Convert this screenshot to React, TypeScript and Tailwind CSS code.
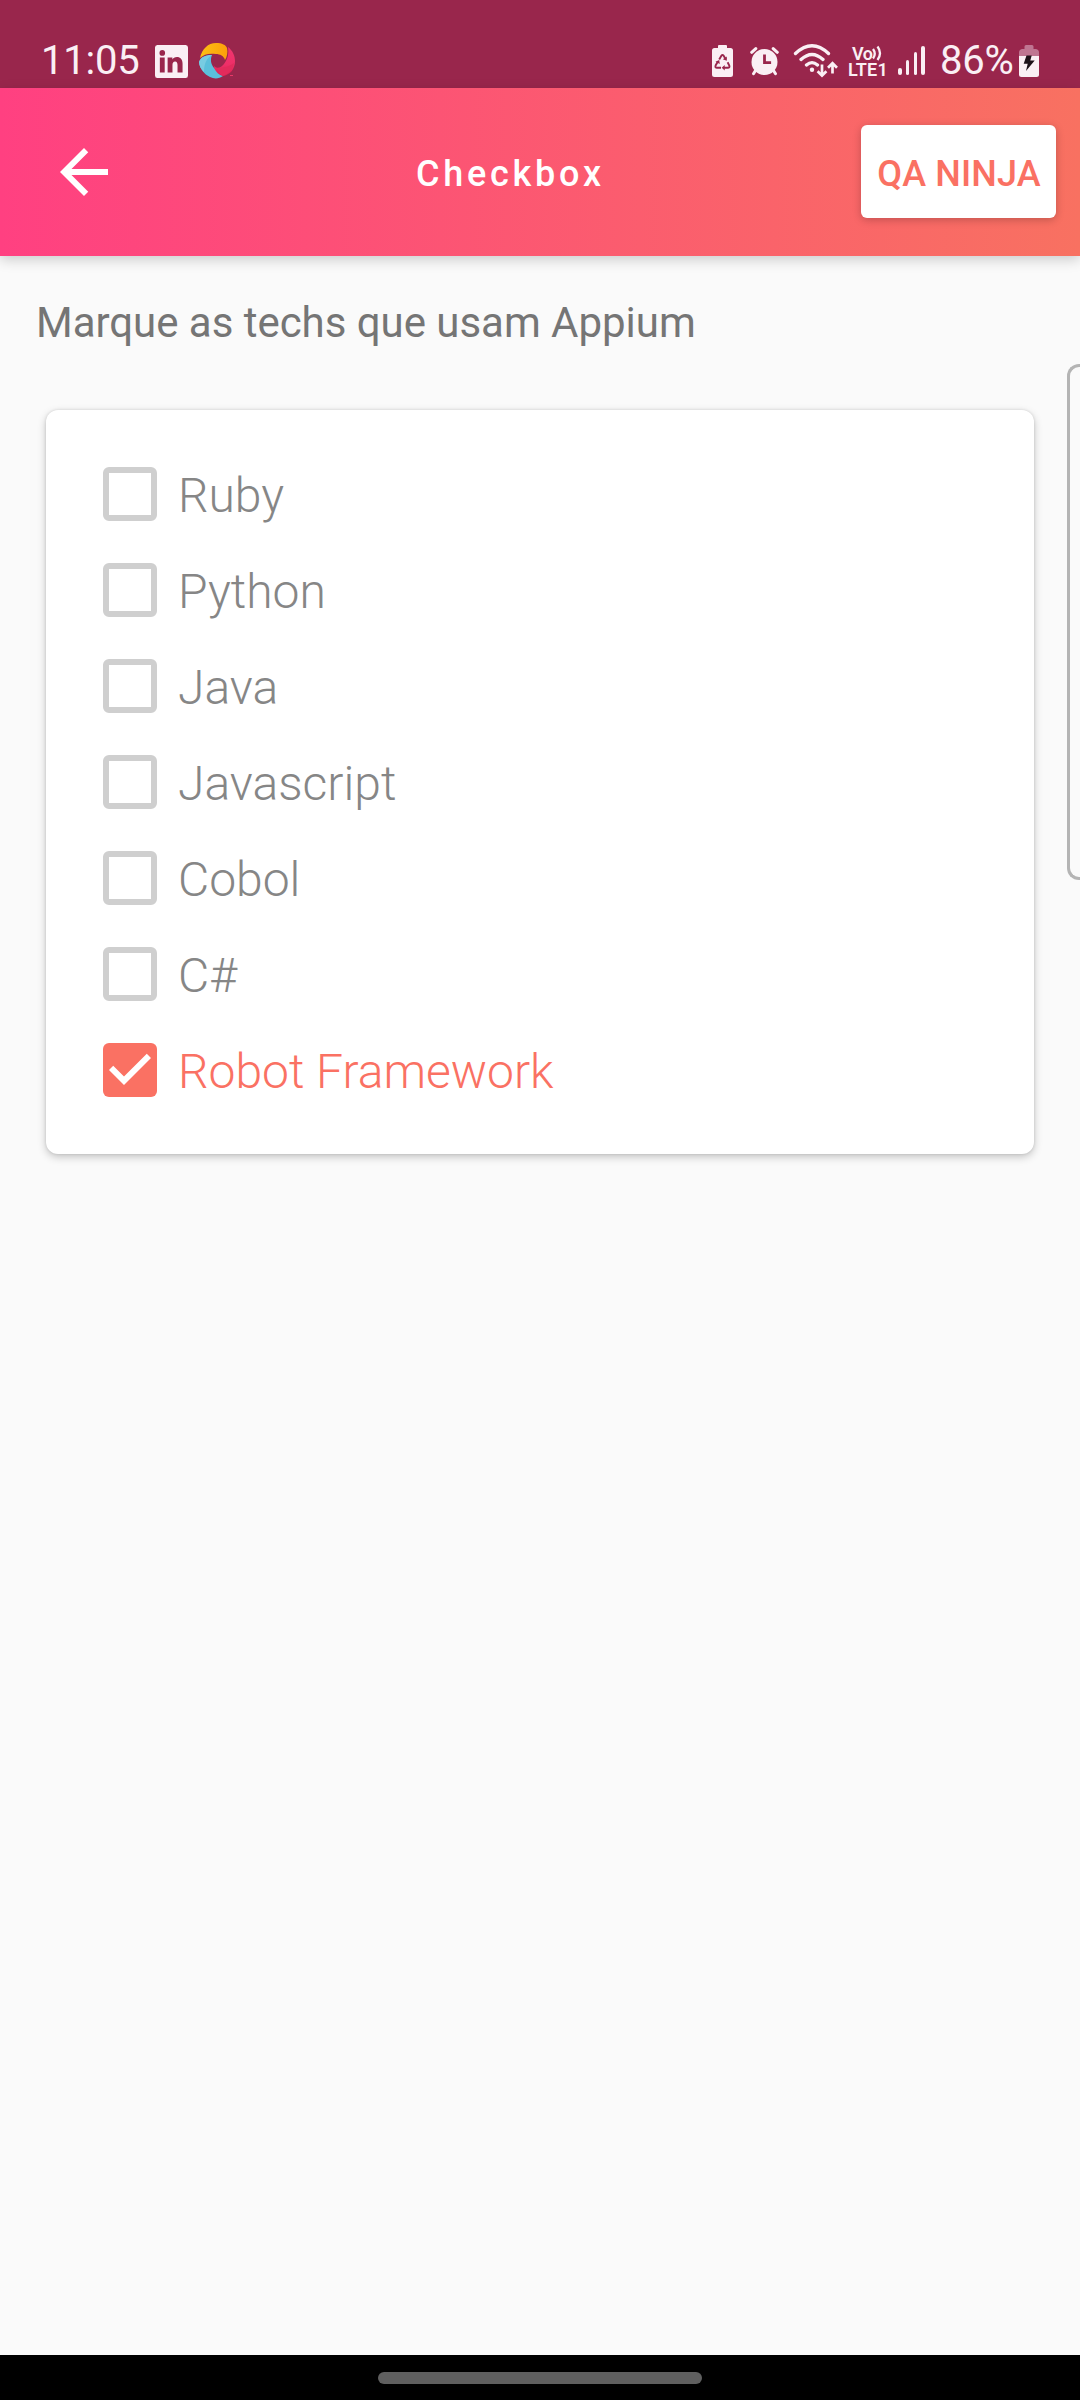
import { useState } from "react";

const TECHS = ["Ruby", "Python", "Java", "Javascript", "Cobol", "C#", "Robot Framework"];

function LinkedInIcon() {
  return (
    <svg className="ml-[16px] mt-[45px] h-[33px] w-[33px]" viewBox="0 0 34 33" preserveAspectRatio="none">
      <path
        fillRule="evenodd"
        fill="#faeff4"
        d="M2.500 0h29a2.500 2.500 0 0 1 2.500 2.500v28a2.500 2.500 0 0 1-2.500 2.500h-29A2.500 2.500 0 0 1 0 30.500v-28A2.500 2.500 0 0 1 2.500 0zM5 12.500V27.500h5V12.500zM7.500 5a2.900 2.900 0 1 0 0 5.800 2.900 2.900 0 0 0 0-5.800zM13 12.500V27.500h5v-7.500c0-2.300.9-3.600 2.700-3.600s2.500 1.400 2.500 3.700v7.400h5.200v-8.700c0-4.400-2.300-6.700-5.800-6.700-2.300 0-3.900 1-4.700 2.500v-2.100z"
      />
    </svg>
  );
}

function SwirlIcon() {
  return (
    <svg className="ml-[11px] mt-[43px] h-[36px] w-[36px]" viewBox="0 0 36 36">
      <defs>
        <linearGradient id="swirl-yellow" x1="0" x2="1">
          <stop offset="0" stopColor="#fcc014" />
          <stop offset="1" stopColor="#fd9f0b" />
        </linearGradient>
        <linearGradient id="swirl-red" x1="0" x2="0" y1="0" y2="1">
          <stop offset="0" stopColor="#f0366f" />
          <stop offset="0.6" stopColor="#ee2f68" />
          <stop offset="1" stopColor="#d91f4c" />
        </linearGradient>
      </defs>
      <path fill="url(#swirl-yellow)" d="M1 15C3 6 9 0 17 0c6 0 10 2 11 5 1 4 0 9-2 12-1-4-5-6-9-6C10 10 5 11 1 15z" />
      <path fill="url(#swirl-red)" d="M29 4c5 4 7 9 7 14 0 8-5 14-12 15-5 0-9-3-9-10 3 3 7 2 10-2 4-5 5-11 4-17z" />
      <path fill="#5bbfdb" d="M0 19c2-5 6-7 13-7-2 5-1 9 2 13 2 4 5 7 9 8-4 3-9 3-13 1C5 31 1 26 0 19z" />
      <path fill="#78cce2" d="M0 19c2-5 6-7 13-7C8 15 5 20 5 29 2 26 0 23 0 19z" />
      <path fill="#e22b5c" d="M18 25c7 0 13-2 17-5-1 6-5 11-11 13-3-1-5-4-6-8z" />
      <path stroke="#e83968" strokeWidth="1" d="M31 32.500h3" />
    </svg>
  );
}

function BatterySaverIcon() {
  return (
    <svg className="mt-[45px] h-[32px] w-[21px]" viewBox="0 0 21 32">
      <path fill="#faeff4" d="M7 0h7q1 0 1 1v2h3.500q2.500 0 2.500 2.500v24q0 2.500-2.500 2.500h-16Q0 32 0 29.500v-24Q0 3 2.500 3H6V1q0-1 1-1z" />
      <g stroke="#99264c" strokeWidth="1.900" fill="none">
        <path d="M7.200 14.500l2.300-3.900q1-1.500 2 0l2.400 4" />
        <path d="M15.600 17.300l1.700 3.200q.7 2.300-1.500 2.300h-4" />
        <path d="M9 22.800H5q-2.200 0-1.400-2.300l2-3.500" />
      </g>
      <path fill="#99264c" d="M14.800 11.500v4.300l-4-1.500zM12.700 20v5.400l-3-2.600zM3.500 16.800l3.700-1.700.6 4z" />
    </svg>
  );
}

function AlarmIcon() {
  return (
    <svg className="ml-[17px] mt-[47px] h-[29px] w-[29px]" viewBox="0 0 29 29" fill="none" strokeLinecap="round">
      <circle cx="14.500" cy="15" r="13" fill="#faeff4" />
      <path stroke="#faeff4" strokeWidth="3" d="M1.700 5.300L5.800 1.600M27.300 5.300L23.200 1.600M5.500 23.500L3.500 26.700M23.500 23.500l2 3.200" />
      <path stroke="#99264c" strokeWidth="2.800" strokeLinecap="butt" d="M14.500 7.500v8.200h6.600" />
    </svg>
  );
}

function WifiIcon() {
  return (
    <svg className="ml-[14px] mt-[43px] h-[35px] w-[45px]" viewBox="0 0 45 35" fill="none" stroke="#faeff4">
      <path strokeWidth="3.300" strokeLinecap="round" d="M2.500 10.500Q19-5 35.500 10.500M8 16.500q11-10.200 22 0M13.500 22q5.500-4.800 11 0" />
      <circle cx="19" cy="26.700" r="2.200" fill="#faeff4" stroke="none" />
      <path strokeWidth="2.700" d="M29 21.500v11M24.600 28.300l4.400 4.400 4.400-4.400M39.500 30.500V20.500M35 24.700l4.500-4.500 4.500 4.500" />
    </svg>
  );
}

function VolteIcon() {
  return (
    <div className="ml-[10px] mt-[45px] flex w-[41px] flex-col whitespace-nowrap font-semibold text-[#faeff4]">
      <div className="flex h-[17px] items-start pl-[4px]">
        <span className="text-[18px] leading-[17px] tracking-[-0.500px]">Vo</span>
        <svg className="h-[17px] w-[11px]" viewBox="0 0 11 17" fill="none" stroke="#faeff4" strokeWidth="2.300">
          <path d="M1 4q3.500 4.700 0 9.500M5.500 1.500q5 6.700 0 13.500" />
        </svg>
      </div>
      <span className="text-[18px] leading-[16px] tracking-[0.200px]">LTE1</span>
    </div>
  );
}

function SignalIcon() {
  return (
    <div className="ml-[9px] mt-[46px] flex h-[29px] items-end gap-[4px]">
      <span className="h-[7px] w-[4px] rounded-full bg-[#faeff4]" />
      <span className="h-[15px] w-[3px] rounded-full bg-[#faeff4]" />
      <span className="ml-[1px] h-[23px] w-[3px] rounded-full bg-[#faeff4]" />
      <span className="h-[29px] w-[4px] rounded-full bg-[#faeff4]" />
    </div>
  );
}

function ChargingIcon() {
  return (
    <svg className="mt-[45px] h-[32px] w-[20px]" viewBox="0 0 20 32">
      <path fill="#bf7591" d="M7 0h6q1.500 0 1.500 1.500V4H17q3 .5 3 3.500v3.500H0V7.500Q0 4.500 3 4h2.500V1.500Q5.500 0 7 0z" />
      <path fill="#faeff4" d="M0 11h20v18.500q0 2.500-2.500 2.500h-15Q0 32 0 29.500z" />
      <path fill="#1d1118" d="M7.500 10.500h5.200l-1.400 5h4.400L7 26l1.700-7.300H4.700z" />
    </svg>
  );
}

function StatusBar() {
  return (
    <div className="flex h-[88px] items-start justify-between bg-[#99264c] pl-[41px] pr-[41px] text-[#faeff4]">
      <div className="flex items-start">
        <span className="mt-[37px] w-[98px] whitespace-nowrap text-[40px] leading-[47px] tracking-[-0.200px]">11:05</span>
        <LinkedInIcon />
        <SwirlIcon />
      </div>
      <div className="flex items-start">
        <BatterySaverIcon />
        <AlarmIcon />
        <WifiIcon />
        <VolteIcon />
        <SignalIcon />
        <span className="ml-[15px] mt-[37px] w-[79px] whitespace-nowrap text-[40px] leading-[47px] tracking-[-0.200px]">86%</span>
        <ChargingIcon />
      </div>
    </div>
  );
}

function Header() {
  return (
    <header className="relative flex h-[168px] items-center bg-linear-to-r/srgb from-[#ff4081] to-[#f87161] pl-[48px] pr-[24px] shadow-[0_4px_12px_rgba(0,0,0,0.180)]">
      <button aria-label="Voltar" className="size-[72px]">
        <svg viewBox="0 0 24 24" fill="#fff">
          <path d="M20 11H7.830l5.590-5.590L12 4l-8 8 8 8 1.410-1.410L7.830 13H20v-2z" />
        </svg>
      </button>
      <h1 className="ml-[296px] mt-[3px] flex-1 whitespace-nowrap text-[36px] font-medium leading-[42px] tracking-[3.750px] text-white">
        Checkbox
      </h1>
      <button className="mb-[1px] h-[93px] w-[195px] whitespace-nowrap rounded-[6px] bg-white pl-[1px] pt-[4px] text-[36px] font-medium leading-[42px] tracking-[0.150px] text-[#fa7163] shadow-[0_2px_8px_rgba(0,0,0,0.220)]">
        QA NINJA
      </button>
    </header>
  );
}

function TechOption({ label, checked, onToggle }: { label: string; checked: boolean; onToggle: () => void }) {
  return (
    <button role="checkbox" aria-checked={checked} onClick={onToggle} className="flex h-[96px] items-center">
      {checked ? (
        <svg className="size-[54px]" viewBox="3 3 18 18">
          <rect x="3" y="3" width="18" height="18" rx="2" fill="#fa7163" />
          <path fill="#fff" d="M10 17l-5-5 1.410-1.410L10 14.170l7.590-7.590L19 8z" />
        </svg>
      ) : (
        <span className="size-[54px] rounded-[6px] border-[6px] border-[#cfcfcf]" />
      )}
      <span className={`ml-[21px] mt-[4px] whitespace-nowrap text-[48px] font-light leading-[56px] ${checked ? "text-[#fa7163]" : "text-[#868686]"}`}>
        {label}
      </span>
    </button>
  );
}

export default function App() {
  const [selected, setSelected] = useState<string[]>(["Robot Framework"]);
  const toggle = (t: string) =>
    setSelected((s) => (s.includes(t) ? s.filter((x) => x !== t) : [...s, t]));

  return (
    <div className="relative flex h-[2400px] w-[1080px] flex-col overflow-hidden bg-[#fafafa] font-['Roboto',sans-serif]">
      <StatusBar />
      <Header />
      <main className="flex-1">
        <p className="ml-[36px] mt-[42px] text-[42px] leading-[50px] tracking-[-0.030px] text-[#757575]">Marque as techs que usam Appium</p>
        <section className="mx-[46px] mt-[62px] flex h-[744px] flex-col items-start rounded-[12px] bg-white pl-[57px] pt-[36px] shadow-[0_3px_8px_rgba(0,0,0,0.220),0_0_3px_rgba(0,0,0,0.120)]">
          {TECHS.map((t) => (
            <TechOption key={t} label={t} checked={selected.includes(t)} onToggle={() => toggle(t)} />
          ))}
        </section>
      </main>
      <div className="absolute right-0 top-[364px] h-[516px] w-[13px] rounded-l-[12px] border-[3px] border-r-0 border-[#b4b4b4] bg-[#fafafa]" />
      <nav className="flex h-[45px] justify-center bg-black pt-[17px]">
        <div className="h-[12px] w-[324px] rounded-full bg-[#5f5f5f]" />
      </nav>
    </div>
  );
}
